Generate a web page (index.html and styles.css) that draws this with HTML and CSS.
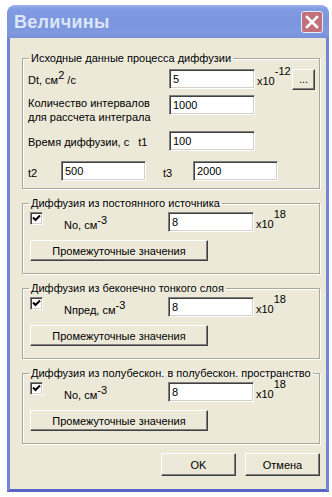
FILE: index.html
```html
<!DOCTYPE html>
<html lang="ru">
<head>
    <meta charset="UTF-8">
    <title>Величины</title>
    <link rel="stylesheet" href="styles.css">
</head>
<body>
    <div class="window">
        <div class="titlebar">
            <span class="title">Величины</span>
            <span class="close">
                <svg width="14" height="14" viewBox="0 0 14 14"><path d="M2 2 L12 12 M12 2 L2 12" stroke="#fff" stroke-width="2.6" stroke-linecap="square"/></svg>
            </span>
        </div>
        <div class="client">
            <fieldset class="group first">
                <legend>Исходные данные процесса диффузии</legend>
                <div class="row r1">
                    <span class="lbl">Dt, см<sup class="pw">2</sup> /с</span>
                    <input class="field" type="text" value="5">
                    <span class="mult">x10<sup class="hi">-12</sup></span>
                    <button class="btn dots">...</button>
                </div>
                <div class="row r2">
                    <span class="lbl two">Количество интервалов<br>для рассчета интеграла</span>
                    <input class="field" type="text" value="1000">
                </div>
                <div class="row r3">
                    <span class="lbl">Время диффузии, с<span class="t1">t1</span></span>
                    <input class="field" type="text" value="100">
                </div>
                <div class="row r4">
                    <span class="tlbl">t2</span>
                    <input class="field small" type="text" value="500">
                    <span class="tlbl t3">t3</span>
                    <input class="field small" type="text" value="2000">
                </div>
            </fieldset>

            <fieldset class="group">
                <legend>Диффузия из постоянного источника</legend>
                <div class="row">
                    <span class="check"><svg width="9" height="9" viewBox="0 0 9 9"><path d="M1 3.5 L3.5 6 L8 1.5" fill="none" stroke="#000" stroke-width="2"/></svg></span>
                    <span class="lbl conc">No, см<sup class="pw">-3</sup></span>
                    <input class="field" type="text" value="8">
                    <span class="mult">x10<sup class="hi">18</sup></span>
                </div>
                <button class="btn wide">Промежуточные значения</button>
            </fieldset>

            <fieldset class="group">
                <legend>Диффузия из беконечно тонкого слоя</legend>
                <div class="row">
                    <span class="check"><svg width="9" height="9" viewBox="0 0 9 9"><path d="M1 3.5 L3.5 6 L8 1.5" fill="none" stroke="#000" stroke-width="2"/></svg></span>
                    <span class="lbl conc">Nпред, см<sup class="pw">-3</sup></span>
                    <input class="field" type="text" value="8">
                    <span class="mult">x10<sup class="hi">18</sup></span>
                </div>
                <button class="btn wide">Промежуточные значения</button>
            </fieldset>

            <fieldset class="group">
                <legend>Диффузия из полубескон. в полубескон. пространство</legend>
                <div class="row">
                    <span class="check"><svg width="9" height="9" viewBox="0 0 9 9"><path d="M1 3.5 L3.5 6 L8 1.5" fill="none" stroke="#000" stroke-width="2"/></svg></span>
                    <span class="lbl conc">No, см<sup class="pw">-3</sup></span>
                    <input class="field" type="text" value="8">
                    <span class="mult">x10<sup class="hi">18</sup></span>
                </div>
                <button class="btn wide">Промежуточные значения</button>
            </fieldset>

            <div class="footer">
                <button class="btn action">OK</button>
                <button class="btn action">Отмена</button>
            </div>
        </div>
    </div>
</body>
</html>
```

FILE: styles.css
```css
body {
    margin: 0;
    background: #fff;
    font-family: "Liberation Sans", Arial, sans-serif;
    font-size: 11px;
    color: #000;
}

.window {
    margin: 5px 0 0 7px;
    width: 322px;
    height: 487px;
    display: flex;
    flex-direction: column;
}

.titlebar {
    height: 33px;
    flex: none;
    box-sizing: border-box;
    display: flex;
    align-items: center;
    justify-content: space-between;
    padding: 0 6px 0 7px;
    border-radius: 8px 8px 0 0;
    background: linear-gradient(#9bb3ec, #819ce2 12%, #7b96dd 50%, #7e99df 85%, #7690d9);
}

.title {
    color: #dde6f9;
    font-weight: bold;
    font-size: 18px;
    letter-spacing: 0.3px;
    padding-top: 2px;
}

.close {
    width: 20px;
    height: 20px;
    display: flex;
    align-items: center;
    justify-content: center;
    border: 1px solid #e6ecf9;
    border-radius: 3px;
    background: #c0717a;
}

.client {
    flex: 1;
    background: #ece9d8;
    border: 3px solid #7187dc;
    border-top: 0;
    border-bottom-color: #5864c8;
    padding: 13px 6px 0 12px;
    display: flex;
    flex-direction: column;
}

.group {
    margin: 0;
    padding: 0 0 12px 5px;
    border: 1px solid #aca899;
    box-shadow: 1px 1px 0 #fff, inset 1px 1px 0 #fff;
}

.group + .group {
    margin-top: 7px;
}

.group.first {
    padding-bottom: 7px;
}

legend {
    padding: 0 2px;
    margin-left: 1px;
    line-height: 14px;
    white-space: nowrap;
}

.row {
    display: flex;
    align-items: center;
    margin-top: 2px;
    height: 20px;
}

.first .row.r1 { margin-top: 4px; }
.first .row.r2 { margin-top: 6px; height: 28px; align-items: flex-start; }
.first .row.r3 { margin-top: 8px; }
.first .row.r4 { margin-top: 10px; }

.lbl {
    width: 141px;
    flex: none;
    white-space: nowrap;
    padding-top: 2px;
}

.lbl.two {
    line-height: 14px;
    padding-top: 1px;
}

.t1 {
    margin-left: 9px;
}

sup {
    font-size: 11px;
    line-height: 0;
    vertical-align: 5px;
}

sup.hi {
    vertical-align: 10px;
}

.tlbl {
    width: 33px;
    flex: none;
    padding-top: 4px;
}

.tlbl.t3 {
    margin-left: 17px;
    width: 30px;
}

.field {
    width: 86px;
    height: 20px;
    box-sizing: border-box;
    margin: 0;
    padding: 0 3px;
    font: 11px "Liberation Sans", Arial, sans-serif;
    background: #fff;
    border: 1px solid;
    border-color: #808080 #fff #fff #808080;
    box-shadow: inset 1px 1px 0 #404040, inset -1px -1px 0 #d4d0c8;
    outline: none;
}

.field.small {
    width: 85px;
}

.mult {
    align-self: flex-end;
    margin-left: 2px;
    line-height: 14px;
    padding-bottom: 1px;
    white-space: nowrap;
}

.check {
    width: 13px;
    height: 13px;
    box-sizing: border-box;
    margin: 0 21px 0 2px;
    align-self: flex-start;
    display: flex;
    align-items: center;
    justify-content: center;
    background: #fff;
    border: 1px solid;
    border-color: #808080 #fff #fff #808080;
    box-shadow: inset 1px 1px 0 #404040, inset -1px -1px 0 #d4d0c8;
}

.lbl.conc {
    width: 104px;
    padding-top: 5px;
}

.btn {
    box-sizing: border-box;
    margin: 0;
    padding: 0;
    font: 11px "Liberation Sans", Arial, sans-serif;
    color: #000;
    background: #ece9d8;
    border: 1px solid;
    border-color: #fff #404040 #404040 #fff;
    box-shadow: inset -1px -1px 0 #808080;
}

.btn.dots {
    width: 23px;
    height: 21px;
    margin-left: auto;
    margin-right: 4px;
    line-height: 10px;
}

.btn.wide {
    display: block;
    width: 178px;
    height: 21px;
    margin: 8px 0 0 2px;
}

.footer {
    display: flex;
    justify-content: flex-end;
    gap: 9px;
    margin-top: 9px;
}

.btn.action {
    width: 75px;
    height: 23px;
}
```
